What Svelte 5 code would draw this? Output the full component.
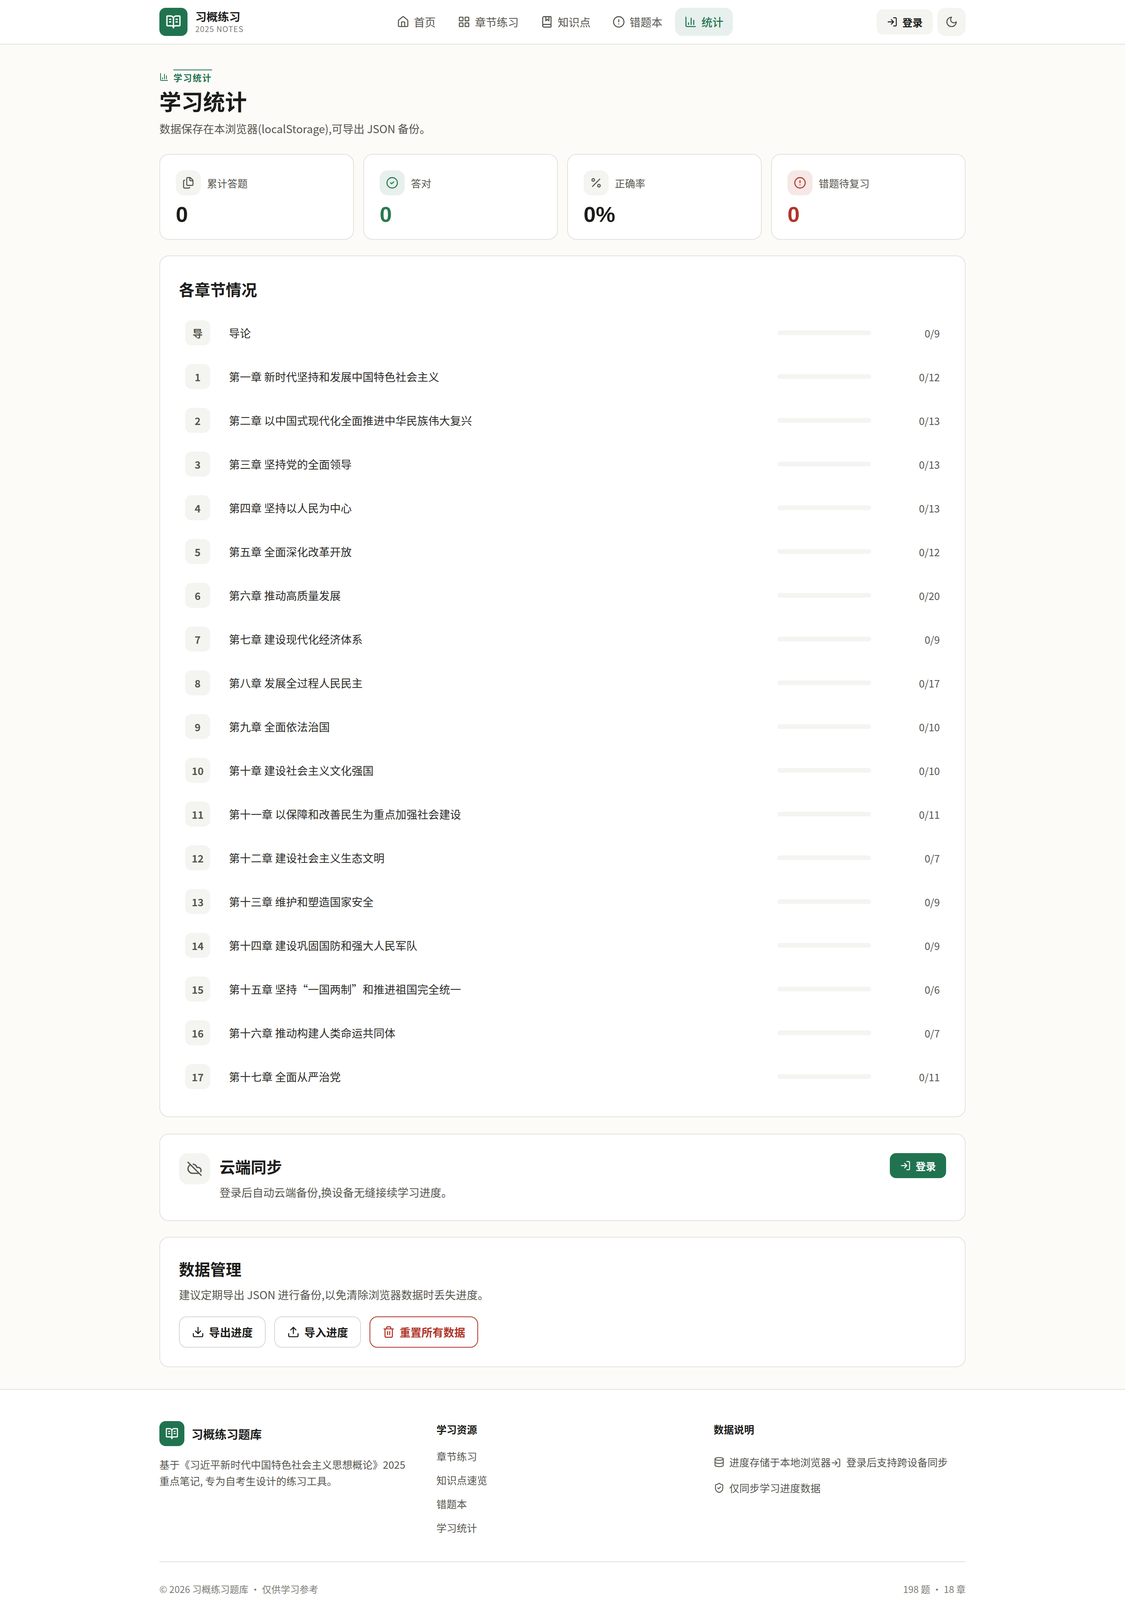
<script>
	const ICONS = {
		book: ['M12 7v14', 'M16 12h2', 'M16 8h2', 'M3 18a1 1 0 0 1-1-1V4a1 1 0 0 1 1-1h5a4 4 0 0 1 4 4 4 4 0 0 1 4-4h5a1 1 0 0 1 1 1v13a1 1 0 0 1-1 1h-6a3 3 0 0 0-3 3 3 3 0 0 0-3-3z', 'M6 12h2', 'M6 8h2'],
		house: ['M15 21v-8a1 1 0 0 0-1-1h-4a1 1 0 0 0-1 1v8', 'M3 10a2 2 0 0 1 .709-1.528l7-5.999a2 2 0 0 1 2.582 0l7 5.999A2 2 0 0 1 21 10v9a2 2 0 0 1-2 2H5a2 2 0 0 1-2-2z'],
		grid: ['M4 3h5a1 1 0 0 1 1 1v5a1 1 0 0 1-1 1H4a1 1 0 0 1-1-1V4a1 1 0 0 1 1-1z', 'M15 3h5a1 1 0 0 1 1 1v5a1 1 0 0 1-1 1h-5a1 1 0 0 1-1-1V4a1 1 0 0 1 1-1z', 'M15 14h5a1 1 0 0 1 1 1v5a1 1 0 0 1-1 1h-5a1 1 0 0 1-1-1v-5a1 1 0 0 1 1-1z', 'M4 14h5a1 1 0 0 1 1 1v5a1 1 0 0 1-1 1H4a1 1 0 0 1-1-1v-5a1 1 0 0 1 1-1z'],
		marked: ['M10 2v8l3-3 3 3V2', 'M4 19.5v-15A2.5 2.5 0 0 1 6.5 2H19a1 1 0 0 1 1 1v18a1 1 0 0 1-1 1H6.5a1 1 0 0 1 0-5H20'],
		alert: ['M22 12a10 10 0 1 1-20 0 10 10 0 0 1 20 0z', 'M12 8v4', 'M12 16h.01'],
		chart: ['M3 3v16a2 2 0 0 0 2 2h16', 'M18 17V9', 'M13 17V5', 'M8 17v-3'],
		login: ['m10 17 5-5-5-5', 'M15 12H3', 'M15 3h4a2 2 0 0 1 2 2v14a2 2 0 0 1-2 2h-4'],
		moon: ['M12 3a6 6 0 0 0 9 9 9 9 0 1 1-9-9Z'],
		files: ['M15 2h-4a2 2 0 0 0-2 2v11a2 2 0 0 0 2 2h8a2 2 0 0 0 2-2V8', 'M16.706 2.706A2.4 2.4 0 0 0 15 2v5a1 1 0 0 0 1 1h5a2.4 2.4 0 0 0-.706-1.706z', 'M5 7a2 2 0 0 0-2 2v11a2 2 0 0 0 2 2h8a2 2 0 0 0 1.732-1'],
		check: ['M22 12a10 10 0 1 1-20 0 10 10 0 0 1 20 0z', 'm9 12 2 2 4-4'],
		percent: ['M19 5 5 19', 'M9 6.5a2.5 2.5 0 1 1-5 0 2.5 2.5 0 0 1 5 0z', 'M20 17.5a2.5 2.5 0 1 1-5 0 2.5 2.5 0 0 1 5 0z'],
		cloudOff: ['m2 2 20 20', 'M5.782 5.782A7 7 0 0 0 9 19h8.5a4.5 4.5 0 0 0 1.307-.193', 'M21.532 16.5A4.5 4.5 0 0 0 17.5 10h-1.79A7.008 7.008 0 0 0 10 5.07'],
		download: ['M12 15V3', 'M21 15v4a2 2 0 0 1-2 2H5a2 2 0 0 1-2-2v-4', 'm7 10 5 5 5-5'],
		upload: ['M12 3v12', 'm17 8-5-5-5 5', 'M21 15v4a2 2 0 0 1-2 2H5a2 2 0 0 1-2-2v-4'],
		trash: ['M10 11v6', 'M14 11v6', 'M19 6v14a2 2 0 0 1-2 2H7a2 2 0 0 1-2-2V6', 'M3 6h18', 'M8 6V4a2 2 0 0 1 2-2h4a2 2 0 0 1 2 2v2'],
		database: ['M21 5c0 1.66-4.03 3-9 3s-9-1.34-9-3 4.03-3 9-3 9 1.34 9 3z', 'M3 5V19A9 3 0 0 0 21 19V5', 'M3 12A9 3 0 0 0 21 12'],
		shield: ['M20 13c0 5-3.5 7.5-7.66 8.95a1 1 0 0 1-.67-.01C7.5 20.5 4 18 4 13V6a1 1 0 0 1 1-1c2 0 4.5-1.2 6.24-2.72a1.17 1.17 0 0 1 1.52 0C14.51 3.81 17 5 19 5a1 1 0 0 1 1 1z', 'm9 12 2 2 4-4']
	};

	const navItems = [
		{ label: '首页', icon: 'house' },
		{ label: '章节练习', icon: 'grid' },
		{ label: '知识点', icon: 'marked' },
		{ label: '错题本', icon: 'alert' },
		{ label: '统计', icon: 'chart', active: true }
	];

	const stats = [
		{ label: '累计答题', value: '0', icon: 'files' },
		{ label: '答对', value: '0', icon: 'check', tone: 'good' },
		{ label: '正确率', value: '0%', icon: 'percent' },
		{ label: '错题待复习', value: '0', icon: 'alert', tone: 'bad' }
	];

	const chapters = [
		['导', '导论', 9],
		['1', '第一章 新时代坚持和发展中国特色社会主义', 12],
		['2', '第二章 以中国式现代化全面推进中华民族伟大复兴', 13],
		['3', '第三章 坚持党的全面领导', 13],
		['4', '第四章 坚持以人民为中心', 13],
		['5', '第五章 全面深化改革开放', 12],
		['6', '第六章 推动高质量发展', 20],
		['7', '第七章 建设现代化经济体系', 9],
		['8', '第八章 发展全过程人民民主', 17],
		['9', '第九章 全面依法治国', 10],
		['10', '第十章 建设社会主义文化强国', 10],
		['11', '第十一章 以保障和改善民生为重点加强社会建设', 11],
		['12', '第十二章 建设社会主义生态文明', 7],
		['13', '第十三章 维护和塑造国家安全', 9],
		['14', '第十四章 建设巩固国防和强大人民军队', 9],
		['15', '第十五章 坚持“一国两制”和推进祖国完全统一', 6],
		['16', '第十六章 推动构建人类命运共同体', 7],
		['17', '第十七章 全面从严治党', 11]
	];

	const footerLinks = ['章节练习', '知识点速览', '错题本', '学习统计'];
</script>

{#snippet icon(name, size, width = 2)}
	<svg class="icon" viewBox="0 0 24 24" width={size} height={size} fill="none" stroke="currentColor" stroke-width={width} stroke-linecap="round" stroke-linejoin="round">
		{#each ICONS[name] as d}
			<path {d} />
		{/each}
	</svg>
{/snippet}

<div class="page">
	<header class="topbar">
		<div class="brand">
			<div class="logo">{@render icon('book', 40)}</div>
			<div class="brand-text">
				<div class="brand-name">习概练习</div>
				<div class="brand-sub">2025 NOTES</div>
			</div>
		</div>
		<nav class="nav">
			{#each navItems as item}
				<a class="nav-item" class:active={item.active} href="#top">
					{@render icon(item.icon, 32)}
					<span>{item.label}</span>
				</a>
			{/each}
		</nav>
		<div class="top-actions">
			<button class="login-ghost" type="button">{@render icon('login', 28)}<span>登录</span></button>
			<button class="theme" type="button" aria-label="切换主题">{@render icon('moon', 32)}</button>
		</div>
	</header>

	<main class="main">
		<div class="eyebrow">
			{@render icon('chart', 24)}
			<span>学习统计</span>
		</div>
		<h1>学习统计</h1>
		<p class="lead">数据保存在本浏览器(localStorage),可导出 JSON 备份。</p>

		<section class="stats">
			{#each stats as s}
				<div class="stat card">
					<div class="stat-head">
						<div class="stat-icon {s.tone ?? ''}">{@render icon(s.icon, 32)}</div>
						<span>{s.label}</span>
					</div>
					<div class="stat-value {s.tone ?? ''}">{s.value}</div>
				</div>
			{/each}
		</section>

		<section class="card chapters">
			<h2>各章节情况</h2>
			<div class="rows">
				{#each chapters as [num, title, total]}
					<div class="row">
						<div class="num">{num}</div>
						<div class="row-title">{title}</div>
						<div class="bar"></div>
						<div class="count">0/{total}</div>
					</div>
				{/each}
			</div>
		</section>

		<section class="card cloud">
			<div class="cloud-icon">{@render icon('cloudOff', 40)}</div>
			<div class="cloud-body">
				<h2>云端同步</h2>
				<p>登录后自动云端备份,换设备无缝接续学习进度。</p>
			</div>
			<button class="login-solid" type="button">{@render icon('login', 28)}<span>登录</span></button>
		</section>

		<section class="card manage">
			<h2>数据管理</h2>
			<p>建议定期导出 JSON 进行备份,以免清除浏览器数据时丢失进度。</p>
			<div class="manage-actions">
				<button class="outline" type="button">{@render icon('download', 32)}<span>导出进度</span></button>
				<button class="outline" type="button">{@render icon('upload', 32)}<span>导入进度</span></button>
				<button class="outline danger" type="button">{@render icon('trash', 32)}<span>重置所有数据</span></button>
			</div>
		</section>
	</main>

	<footer class="footer">
		<div class="footer-inner">
			<div class="footer-grid">
				<div>
					<div class="footer-brand">
						<div class="logo small">{@render icon('book', 34)}</div>
						<span>习概练习题库</span>
					</div>
					<p class="footer-desc">基于《习近平新时代中国特色社会主义思想概论》2025 重点笔记, 专为自考生设计的练习工具。</p>
				</div>
				<div>
					<h3>学习资源</h3>
					<ul class="links">
						{#each footerLinks as link}
							<li>{link}</li>
						{/each}
					</ul>
				</div>
				<div>
					<h3>数据说明</h3>
					<ul class="notes">
						<li>{@render icon('database', 28)}<span>进度存储于本地浏览器{@render icon('login', 26)} 登录后支持跨设备同步</span></li>
						<li>{@render icon('shield', 28)}<span>仅同步学习进度数据</span></li>
					</ul>
				</div>
			</div>
			<div class="footer-bottom">
				<span>© 2026 习概练习题库 · 仅供学习参考</span>
				<span>198 题 · 18 章</span>
			</div>
		</div>
	</footer>
</div>

<style>
	:global(body) {
		margin: 0;
		background: #fcfbf7;
	}
	.page {
		font-family: "Noto Sans CJK SC", "Noto Sans", sans-serif;
		color: #1c1c1a;
	}
	.icon {
		flex: none;
		display: block;
	}
	h1, h2, h3, p, ul {
		margin: 0;
		padding: 0;
	}
	ul {
		list-style: none;
	}
	button {
		font-family: inherit;
		border: none;
		display: flex;
		align-items: center;
		justify-content: center;
	}

	.topbar {
		height: 112px;
		padding: 0 408px;
		background: #fff;
		border-bottom: 2px solid #e3e2dc;
		display: flex;
		align-items: center;
		justify-content: space-between;
	}
	.brand {
		display: flex;
		align-items: center;
		gap: 20px;
	}
	.logo {
		width: 72px;
		height: 72px;
		border-radius: 16px;
		background: #217350;
		color: #fff;
		display: flex;
		align-items: center;
		justify-content: center;
	}
	.logo.small {
		width: 64px;
		height: 64px;
	}
	.brand-name {
		font-size: 28.8px;
		font-weight: 700;
		line-height: 36px;
	}
	.brand-sub {
		font-size: 20px;
		line-height: 28px;
		letter-spacing: 1px;
		color: #7d7d76;
	}
	.nav {
		display: flex;
		gap: 8px;
	}
	.nav-item {
		height: 72px;
		padding: 0 24px;
		border-radius: 20px;
		display: flex;
		align-items: center;
		gap: 12px;
		font-size: 28px;
		color: #56564f;
		text-decoration: none;
	}
	.nav-item.active {
		background: #e7f0ec;
		color: #217350;
		font-weight: 500;
	}
	.top-actions {
		display: flex;
		align-items: center;
		gap: 12px;
	}
	.login-ghost {
		height: 64px;
		padding: 0 26px;
		gap: 12px;
		border-radius: 16px;
		background: #f4f5f1;
		color: #1c1c1a;
		font-size: 26px;
		font-weight: 700;
	}
	.theme {
		width: 72px;
		height: 72px;
		padding: 0;
		border-radius: 20px;
		background: #f4f5f1;
		color: #56564f;
	}

	.main {
		width: 2064px;
		margin: 0 auto;
		padding: 64px 0 56px;
	}
	.eyebrow {
		display: flex;
		align-items: center;
		gap: 12px;
		color: #217350;
		font-size: 22.4px;
		font-weight: 700;
		letter-spacing: 2.24px;
		line-height: 36px;
	}
	.eyebrow span {
		border-top: 2px solid #217350;
	}
	h1 {
		margin-top: 7px;
		font-size: 56px;
		line-height: 70px;
		font-weight: 700;
	}
	.lead {
		margin-top: 16px;
		font-size: 28px;
		line-height: 40px;
		color: #56564f;
	}
	.card {
		background: #fff;
		border: 2px solid #e3e2dc;
		border-radius: 24px;
		box-sizing: border-box;
	}
	.stats {
		margin-top: 45px;
		display: grid;
		grid-template-columns: repeat(4, 1fr);
		gap: 24px;
	}
	.stat {
		padding: 40px;
		height: 220px;
	}
	.stat-head {
		display: flex;
		align-items: center;
		gap: 16px;
		font-size: 26px;
		color: #56564f;
	}
	.stat-icon {
		width: 64px;
		height: 64px;
		border-radius: 20px;
		background: #f4f5f1;
		color: #56564f;
		display: flex;
		align-items: center;
		justify-content: center;
	}
	.stat-icon.good {
		background: #e7f0ec;
		color: #2a7a50;
	}
	.stat-icon.bad {
		background: #f6e8e6;
		color: #b0352a;
	}
	.stat-value {
		margin-top: 20px;
		font-family: "Liberation Sans", sans-serif;
		font-size: 56px;
		line-height: 58px;
		font-weight: 700;
	}
	.stat-value.good {
		color: #2a7a50;
	}
	.stat-value.bad {
		color: #b0352a;
	}

	.chapters {
		margin-top: 40px;
		padding: 56px 48px 46px;
	}
	h2 {
		font-size: 40px;
		line-height: 56px;
		font-weight: 700;
	}
	.rows {
		margin-top: 28px;
	}
	.row {
		height: 112px;
		padding: 0 16px;
		display: flex;
		align-items: center;
	}
	.num {
		width: 64px;
		height: 64px;
		border-radius: 16px;
		background: #f4f5f1;
		display: flex;
		align-items: center;
		justify-content: center;
		font-size: 26px;
		font-weight: 700;
		color: #56564f;
	}
	.row-title {
		flex: 1;
		margin-left: 48px;
		font-size: 28px;
		color: #2b2b28;
	}
	.bar {
		width: 240px;
		height: 12px;
		border-radius: 6px;
		background: #f4f5f1;
	}
	.count {
		width: 176px;
		text-align: right;
		font-size: 26px;
		color: #56564f;
	}

	.cloud {
		margin-top: 42px;
		padding: 48px 48px 52px;
		display: flex;
		align-items: flex-start;
		gap: 24px;
	}
	.cloud-icon {
		width: 80px;
		height: 80px;
		border-radius: 24px;
		background: #f4f5f1;
		color: #56564f;
		display: flex;
		align-items: center;
		justify-content: center;
	}
	.cloud-body {
		flex: 1;
	}
	.cloud-body h2 {
		line-height: 68px;
	}
	.cloud-body p {
		margin-top: 12px;
		font-size: 28px;
		line-height: 40px;
		color: #56564f;
	}
	.login-solid {
		height: 64px;
		width: 144px;
		gap: 12px;
		border-radius: 16px;
		background: #217350;
		color: #fff;
		font-size: 26px;
		font-weight: 700;
	}

	.manage {
		margin-top: 40px;
		padding: 48px;
	}
	.manage h2 {
		line-height: 64px;
	}
	.manage p {
		margin-top: 14px;
		font-size: 28px;
		line-height: 40px;
		color: #56564f;
	}
	.manage-actions {
		margin-top: 36px;
		display: flex;
		gap: 22px;
	}
	.outline {
		height: 80px;
		padding: 0 31px;
		gap: 12px;
		border: 2px solid #d9d8d1;
		border-radius: 20px;
		background: #fff;
		color: #1c1c1a;
		font-size: 28px;
		font-weight: 700;
	}
	.outline.danger {
		border-color: #b0352a;
		color: #b0352a;
	}

	.footer {
		background: #fff;
		border-top: 2px solid #e3e2dc;
		padding: 80px 0;
	}
	.footer-inner {
		width: 2064px;
		margin: 0 auto;
	}
	.footer-grid {
		display: grid;
		grid-template-columns: repeat(3, 1fr);
		gap: 64px;
		padding-bottom: 65px;
		border-bottom: 2px solid #e3e2dc;
	}
	.footer-brand {
		display: flex;
		align-items: center;
		gap: 18px;
		font-size: 30px;
		font-weight: 700;
	}
	.footer-desc {
		margin-top: 26px;
		font-size: 26px;
		line-height: 42px;
		color: #56564f;
	}
	h3 {
		font-size: 26px;
		line-height: 42px;
		font-weight: 700;
	}
	.links {
		margin-top: 27px;
		display: flex;
		flex-direction: column;
		gap: 19px;
		font-size: 26px;
		line-height: 42px;
		color: #56564f;
	}
	.notes {
		margin-top: 42px;
		display: flex;
		flex-direction: column;
		gap: 24px;
		font-size: 26px;
		line-height: 42px;
		color: #56564f;
	}
	.notes li {
		display: flex;
		align-items: center;
		gap: 12px;
	}
	.notes li span svg {
		display: inline-block;
		vertical-align: -4px;
		margin-right: 8px;
	}
	.footer-bottom {
		padding-top: 51px;
		display: flex;
		justify-content: space-between;
		font-size: 24px;
		line-height: 36px;
		color: #7d7d76;
	}
</style>
